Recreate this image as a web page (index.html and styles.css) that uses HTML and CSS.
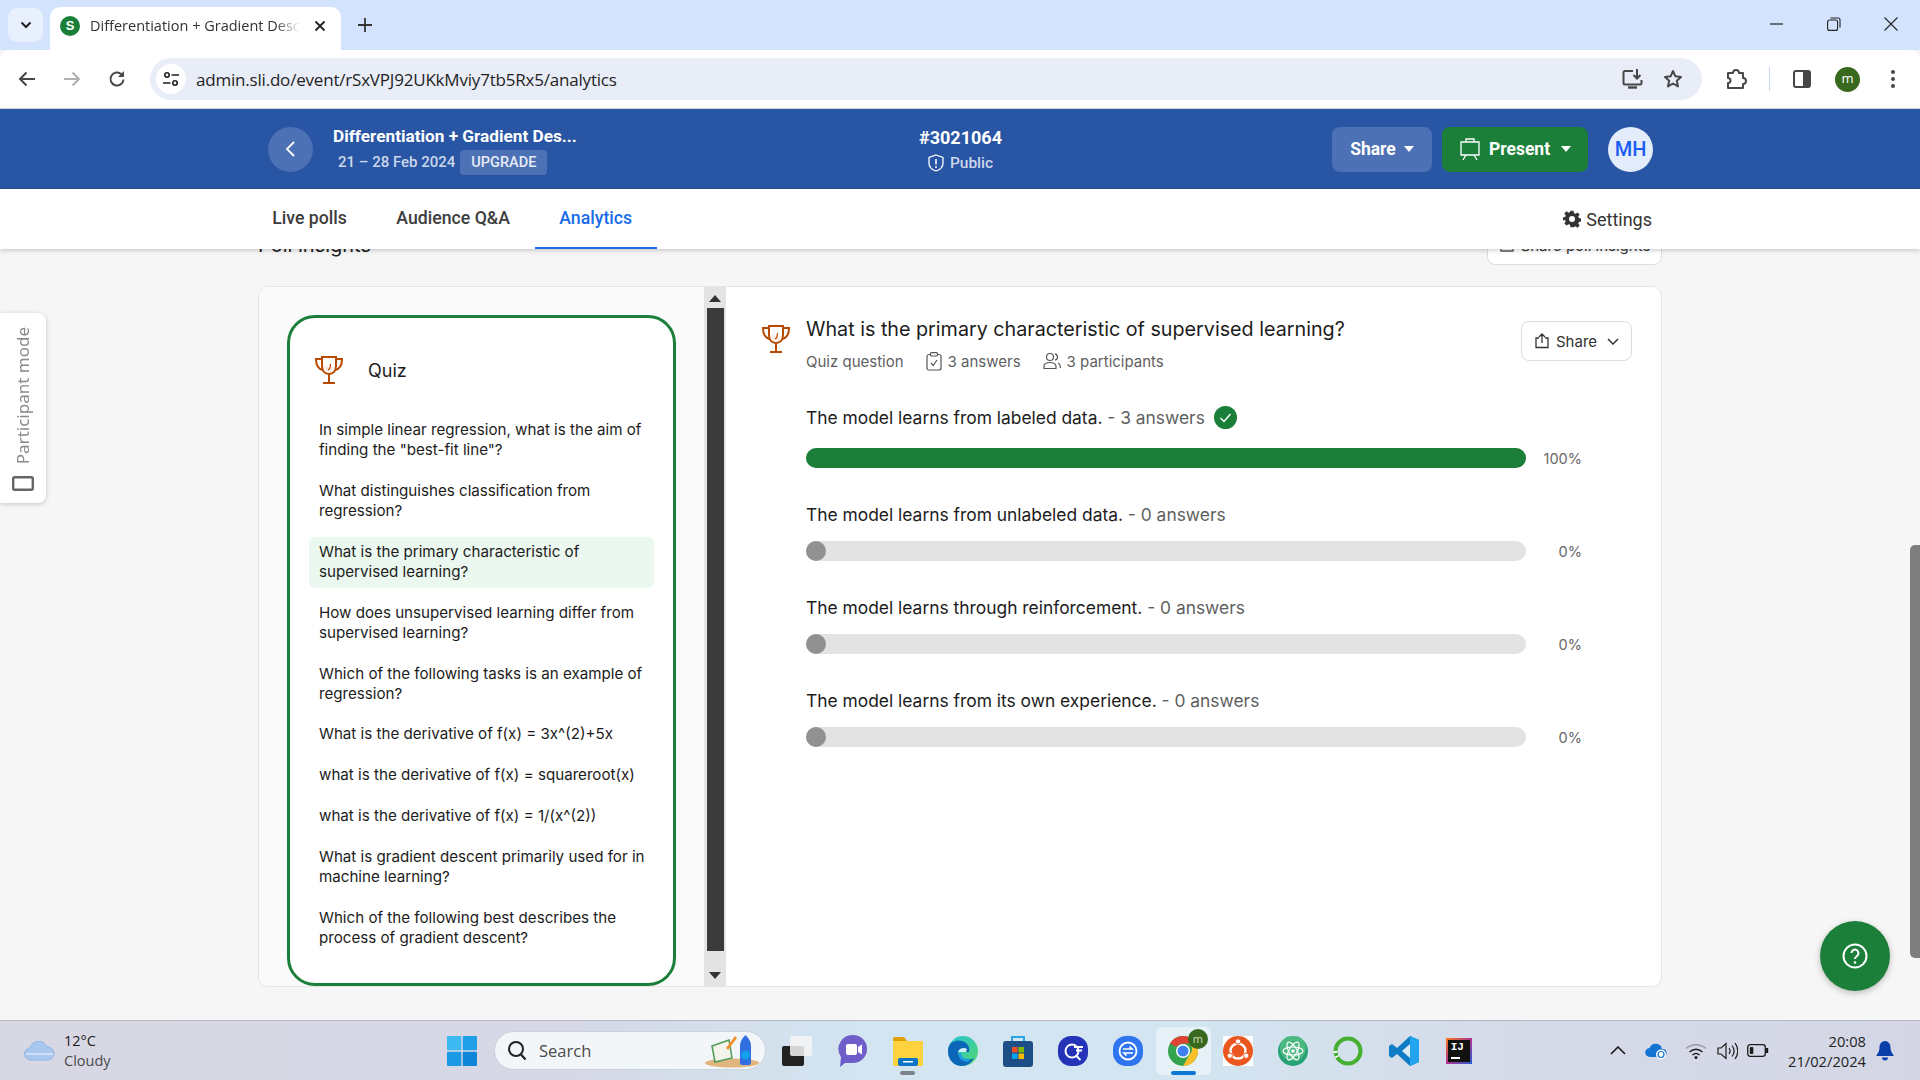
FILE: index.html
```html
<!DOCTYPE html>
<html lang="en">
<head>
  <meta charset="UTF-8" />
  <title>Differentiation + Gradient Descent - Analytics</title>
  <link rel="stylesheet" href="styles.css">
</head>
<body>

  <svg class="defs" width="0" height="0">
    <symbol id="trophy" viewBox="0 0 30 30">
      <path d="M8 2h14v9c0 5-3 8-7 8s-7-3-7-8z" fill="#fff" stroke="#b84a00" stroke-width="2"/>
      <path d="M10 11c1 4 3 6 5 6.500 2 0 4-2 5-5z" fill="#f7e3d6" opacity=".7"/>
      <path d="M8 4H2c0 6 2 10 7 11M22 4h6c0 6-2 10-7 11M15 19v8M9 28h12" fill="none" stroke="#b84a00" stroke-width="2"/>
      <path d="M16.500 9c0 3 0 5-2.500 6" fill="none" stroke="#b84a00" stroke-width="1.300"/>
    </symbol>
    <symbol id="caret" viewBox="0 0 10 6"><path d="M0 0h10L5 6z" fill="#fff"/></symbol>
  </svg>

  <!-- browser tabs -->
  <div class="tabstrip">
    <div class="tab-drop"><svg width="12" height="8" viewBox="0 0 12 8"><path d="M1.500 1.500L6 6l4.500-4.500" fill="none" stroke="#1f1f1f" stroke-width="2"/></svg></div>
    <div class="tab">
      <span class="favicon">S</span>
      <span class="tab-title">Differentiation + Gradient Descent</span>
      <svg class="tab-close" width="12" height="12" viewBox="0 0 12 12"><path d="M1.500 1.500l9 9M10.500 1.500l-9 9" stroke="#1f1f1f" stroke-width="1.800"/></svg>
    </div>
    <svg class="tab-new" width="14" height="14" viewBox="0 0 14 14"><path d="M7 0v14M0 7h14" stroke="#333" stroke-width="1.800"/></svg>
    <div class="win-btns">
      <svg width="14" height="14" viewBox="0 0 14 14"><path d="M0 7h13" stroke="#222" stroke-width="1.200"/></svg>
      <svg width="14" height="14" viewBox="0 0 14 14"><rect x=".6" y="3" width="10" height="10.400" rx="2" fill="none" stroke="#222" stroke-width="1.100"/><path d="M3.500 1h7.500a2 2 0 0 1 2 2v7.500" fill="none" stroke="#222" stroke-width="1.100"/></svg>
      <svg width="14" height="14" viewBox="0 0 14 14"><path d="M.5.500l13 13M13.500.500l-13 13" stroke="#222" stroke-width="1.100"/></svg>
    </div>
  </div>

  <!-- browser toolbar -->
  <div class="toolbar">
    <svg class="nav-ico" width="18" height="16" viewBox="0 0 18 16"><path d="M17 8H2M8.500 1.500L2 8l6.500 6.500" fill="none" stroke="#474747" stroke-width="2"/></svg>
    <svg class="nav-ico" width="18" height="16" viewBox="0 0 18 16"><path d="M1 8h15M9.500 1.500L16 8l-6.500 6.500" fill="none" stroke="#b0b0b0" stroke-width="2"/></svg>
    <svg class="nav-ico" width="18" height="18" viewBox="0 0 18 18"><path d="M15.500 9.500a6.500 6.500 0 1 1-2-5.200" fill="none" stroke="#474747" stroke-width="2"/><path d="M16 1v6h-6z" fill="#474747"/></svg>
    <div class="urlbar">
      <span class="site-info">
        <svg width="16" height="16" viewBox="0 0 16 16"><circle cx="4" cy="4" r="2.200" fill="none" stroke="#1f1f1f" stroke-width="1.600"/><path d="M8.500 4H16M0 12h7.500" stroke="#1f1f1f" stroke-width="1.600"/><circle cx="12" cy="12" r="2.200" fill="none" stroke="#1f1f1f" stroke-width="1.600"/></svg>
      </span>
      <span class="url">admin.sli.do/event/rSxVPJ92UKkMviy7tb5Rx5/analytics</span>
      <svg class="url-ico" width="22" height="22" viewBox="0 0 22 22"><path d="M11 3H3a1.500 1.500 0 0 0-1.500 1.500V15A1.500 1.500 0 0 0 3 16.500h15a1.500 1.500 0 0 0 1.500-1.500v-3" fill="none" stroke="#474747" stroke-width="2"/><path d="M15 1v9M11.500 7l3.500 3.500L18.500 7" fill="none" stroke="#474747" stroke-width="2"/><path d="M6 19.500h9" stroke="#474747" stroke-width="2.400"/></svg>
      <svg class="url-ico star" width="20" height="20" viewBox="0 0 20 20"><path d="M10 2l2.400 5.300 5.600.6-4.200 3.800 1.200 5.700L10 14.500l-5 2.900 1.200-5.700L2 7.900l5.600-.6z" fill="none" stroke="#474747" stroke-width="2" stroke-linejoin="round"/></svg>
    </div>
    <svg class="tool-ext" width="22" height="22" viewBox="0 0 22 22"><path d="M3 5h5a3 3 0 0 1 6 0h4v5a3 3 0 0 1 0 6v4H3v-5a2.500 2.500 0 0 0 0-5z" fill="none" stroke="#474747" stroke-width="2" stroke-linejoin="round"/></svg>
    <span class="tool-sep"></span>
    <svg class="tool-side" width="18" height="18" viewBox="0 0 18 18"><rect x="1" y="1" width="16" height="16" rx="2" fill="none" stroke="#474747" stroke-width="2"/><rect x="10" y="1" width="7" height="16" fill="#474747"/></svg>
    <span class="tool-avatar">m</span>
    <svg class="tool-menu" width="4" height="18" viewBox="0 0 4 18"><circle cx="2" cy="2" r="2" fill="#474747"/><circle cx="2" cy="9" r="2" fill="#474747"/><circle cx="2" cy="16" r="2" fill="#474747"/></svg>
  </div>

  <!-- slido header -->
  <header class="event-head">
    <div class="head-left">
      <span class="round-btn"><svg width="11" height="18" viewBox="0 0 11 18"><path d="M9 2L2 9l7 7" fill="none" stroke="#fff" stroke-width="1.800"/></svg></span>
      <div class="event-info">
        <div class="event-title">Differentiation + Gradient Des...</div>
        <div class="event-meta"><span class="event-date">21 – 28 Feb 2024</span><span class="chip">UPGRADE</span></div>
      </div>
    </div>
    <div class="head-mid">
      <div class="event-code">#3021064</div>
      <div class="event-public">
        <svg width="16" height="18" viewBox="0 0 16 18"><path d="M8 1l7 2.500V9c0 4-3 6.800-7 8-4-1.200-7-4-7-8V3.500z" fill="none" stroke="#fff" stroke-width="1.300"/><path d="M8 5v5.500" stroke="#fff" stroke-width="1.500"/><circle cx="8" cy="13" r="1" fill="#fff"/></svg>
        Public
      </div>
    </div>
    <div class="head-right">
      <span class="btn btn-share">Share <svg width="10" height="6"><use href="#caret"/></svg></span>
      <span class="btn btn-present">
        <svg width="22" height="24" viewBox="0 0 22 24"><path d="M2 5h18v13H2zM7 5V2h8v3M7 18l-3 5M15 18l3 5" fill="none" stroke="#fff" stroke-width="1.300"/></svg>
        Present <svg class="caret-gap" width="10" height="6"><use href="#caret"/></svg>
      </span>
      <span class="user-badge">MH</span>
    </div>
  </header>

  <nav class="nav-tabs">
    <a class="nav-tab">Live polls</a>
    <a class="nav-tab">Audience Q&amp;A</a>
    <a class="nav-tab active">Analytics</a>
    <span class="settings">
      <svg width="18" height="18" viewBox="0 0 24 24"><path fill="#333" fill-rule="evenodd" d="M10 1h4l.7 3.200 1.900.8 2.800-1.800 2.800 2.800-1.800 2.800.8 1.900 3.200.7v4l-3.200.7-.8 1.900 1.800 2.800-2.800 2.800-2.800-1.800-1.900.8L14 23h-4l-.7-3.200-1.900-.8-2.800 1.800-2.800-2.800 1.800-2.800-.8-1.900L-.4 14v-4l3.200-.7.8-1.900L1.800 4.600l2.800-2.800 2.800 1.800 1.900-.8zM12 8a4 4 0 1 0 0 8 4 4 0 0 0 0-8z"/></svg>
      Settings
    </span>
  </nav>

  <main class="page">
    <div class="insights-head">
      <h2>Poll insights</h2>
      <span class="share-insights">
        <svg width="16" height="16" viewBox="0 0 16 16"><path d="M4 3H2v11h12V3h-2M8 1v8" fill="none" stroke="#555" stroke-width="1.300"/></svg>
        Share poll insights
      </span>
    </div>

    <section class="card">
      <div class="list-pane">
        <div class="quiz-box">
          <div class="quiz-head">
            <svg width="30" height="30"><use href="#trophy"/></svg>
            <span>Quiz</span>
          </div>
          <ul class="quiz-list">
            <li>In simple linear regression, what is the aim of finding the "best-fit line"?</li>
            <li>What distinguishes classification from regression?</li>
            <li class="current">What is the primary characteristic of supervised learning?</li>
            <li>How does unsupervised learning differ from supervised learning?</li>
            <li>Which of the following tasks is an example of regression?</li>
            <li>What is the derivative of f(x) = 3x^(2)+5x</li>
            <li>what is the derivative of f(x) = squareroot(x)</li>
            <li>what is the derivative of f(x) = 1/(x^(2))</li>
            <li>What is gradient descent primarily used for in machine learning?</li>
            <li>Which of the following best describes the process of gradient descent?</li>
          </ul>
        </div>
      </div>

      <div class="pane-scroll">
        <svg width="12" height="7" viewBox="0 0 12 7"><path d="M6 0l6 7H0z" fill="#333"/></svg>
        <span class="pane-thumb"></span>
        <svg width="12" height="7" viewBox="0 0 12 7"><path d="M0 0h12L6 7z" fill="#333"/></svg>
      </div>

      <div class="result-pane">
        <div class="result-head">
          <svg class="result-trophy" width="30" height="30"><use href="#trophy"/></svg>
          <div>
            <h3>What is the primary characteristic of supervised learning?</h3>
            <div class="result-sub">
              <span>Quiz question</span>
              <span class="stat">
                <svg width="16" height="19" viewBox="0 0 16 19"><rect x="1" y="2.500" width="14" height="15.500" rx="2" fill="none" stroke="#555" stroke-width="1.200"/><rect x="4.500" y=".7" width="7" height="3.300" rx="1" fill="#fff" stroke="#555" stroke-width="1.200"/><path d="M5 11l2.200 2.500L11 8" fill="none" stroke="#555" stroke-width="1.200"/></svg>
                3 answers
              </span>
              <span class="stat">
                <svg width="18" height="18" viewBox="0 0 18 18"><circle cx="7" cy="5" r="3.500" fill="none" stroke="#555" stroke-width="1.200"/><path d="M1 16.500v-2c0-2.500 2-4 6-4s6 1.500 6 4v2z" fill="none" stroke="#555" stroke-width="1.200"/><path d="M12 1.800a3.300 3.300 0 0 1 0 6.400M15 11c1.500.7 2.300 2 2.300 3.500v1.500" fill="none" stroke="#555" stroke-width="1.200"/></svg>
                3 participants
              </span>
            </div>
          </div>
          <span class="result-share">
            <svg width="16" height="16" viewBox="0 0 16 16"><path d="M5 5H2v9.500h12V5h-3M8 10V1.500M5 4l3-3 3 3" fill="none" stroke="#333" stroke-width="1.300"/></svg>
            Share
            <svg class="chev" width="12" height="7" viewBox="0 0 12 7"><path d="M1 1l5 5 5-5" fill="none" stroke="#333" stroke-width="1.500"/></svg>
          </span>
        </div>

        <div class="options">
          <div class="option correct">
            <div class="opt-label">The model learns from labeled data. <em>- 3 answers</em>
              <svg class="opt-check" width="23" height="23" viewBox="0 0 23 23"><circle cx="11.500" cy="11.500" r="11.500" fill="#1b7f3a"/><path d="M6.500 12l3.500 3.500 6.500-7.500" fill="none" stroke="#fff" stroke-width="1.400"/></svg>
            </div>
            <div class="opt-row">
              <div class="bar"><div class="bar-fill" style="width:100%"></div></div>
              <span class="pct">100%</span>
            </div>
          </div>
          <div class="option">
            <div class="opt-label">The model learns from unlabeled data. <em>- 0 answers</em></div>
            <div class="opt-row">
              <div class="bar"><div class="bar-dot"></div></div>
              <span class="pct">0%</span>
            </div>
          </div>
          <div class="option">
            <div class="opt-label">The model learns through reinforcement. <em>- 0 answers</em></div>
            <div class="opt-row">
              <div class="bar"><div class="bar-dot"></div></div>
              <span class="pct">0%</span>
            </div>
          </div>
          <div class="option">
            <div class="opt-label">The model learns from its own experience. <em>- 0 answers</em></div>
            <div class="opt-row">
              <div class="bar"><div class="bar-dot"></div></div>
              <span class="pct">0%</span>
            </div>
          </div>
        </div>
      </div>
    </section>

    <!-- things floating over the page -->
    <div class="side-tab">
      <span class="side-text">Participant mode</span>
      <svg width="22" height="15" viewBox="0 0 22 15"><rect x="1.200" y="1.200" width="19.600" height="12.600" rx="1.500" fill="none" stroke="#666" stroke-width="2.400"/></svg>
    </div>
    <div class="help-fab">
      <svg width="26" height="26" viewBox="0 0 26 26"><circle cx="13" cy="13" r="11.500" fill="none" stroke="#fff" stroke-width="2"/><path d="M9.500 10a3.500 3.500 0 1 1 5.500 3c-1.300.9-2 1.500-2 3" fill="none" stroke="#fff" stroke-width="2"/><circle cx="13" cy="19.500" r="1.300" fill="#fff"/></svg>
    </div>
    <span class="page-thumb"></span>
  </main>

  <!-- windows taskbar -->
  <footer class="taskbar">
    <div class="weather">
      <svg width="31" height="20" viewBox="0 0 31 20"><path d="M7 19a6 6 0 0 1-1-12 9 9 0 0 1 17-1 6.500 6.500 0 0 1 1 13z" fill="#a9c8f0" stroke="#8fb4e6"/><path d="M2 13h27" stroke="#cfe0f7" stroke-width="2"/></svg>
      <div class="weather-text"><div>12°C</div><div class="weather-sub">Cloudy</div></div>
    </div>
    <svg class="start" width="30" height="30" viewBox="0 0 30 30">
      <rect width="14.300" height="14.300" rx="1" fill="#3cb9f0"/><rect x="15.700" width="14.300" height="14.300" rx="1" fill="#1fa0e8"/>
      <rect y="15.700" width="14.300" height="14.300" rx="1" fill="#1a9ae5"/><rect x="15.700" y="15.700" width="14.300" height="14.300" rx="1" fill="#0f86d8"/>
    </svg>
    <div class="search">
      <svg width="20" height="21" viewBox="0 0 20 21"><circle cx="9" cy="9" r="7" fill="none" stroke="#222" stroke-width="2"/><path d="M14 14.500l4.500 5" stroke="#222" stroke-width="2.200"/></svg>
      <span>Search</span>
      <svg class="search-art" width="56" height="34" viewBox="0 0 56 34">
        <ellipse cx="28" cy="29" rx="27" ry="4.500" fill="#e0b57f"/>
        <path d="M8 12l17-6 3 18-17 4z" fill="#f4f4ec" stroke="#4f9a55" stroke-width="1.500"/>
        <path d="M22 14l9-12 2 2-9 12z" fill="#f0922e"/>
        <path d="M36 12c0-4 2-8 5.500-11C45 4 47 8 47 12v17a2 2 0 0 1-2 2h-7a2 2 0 0 1-2-2z" fill="#2f6fe0"/>
        <circle cx="41.500" cy="21" r="4.500" fill="#12a0ea"/>
      </svg>
    </div>

    <div class="task-icons">
      <span class="task-ico">
        <svg width="32" height="32" viewBox="0 0 32 32"><rect x="0" y="11" width="22" height="20" rx="2" fill="#222"/><rect x="8" y="1" width="22" height="20" rx="2" fill="#f4f4f4" fill-opacity=".85"/></svg>
      </span>
      <span class="task-ico">
        <svg width="30" height="34" viewBox="0 0 30 34"><path d="M15 1a14 14 0 0 1 0 28H7l-5 4 1-10A14 14 0 0 1 15 1z" fill="#6f5dc9"/><rect x="8" y="10" width="11" height="11" rx="2" fill="#fff"/><path d="M20 13l4-2.500v10L20 18z" fill="#fff"/></svg>
      </span>
      <span class="task-ico">
        <svg width="30" height="30" viewBox="0 0 30 30"><path d="M0 3a2 2 0 0 1 2-2h9l3 4H0z" fill="#e0a100"/><rect y="5" width="30" height="25" rx="1" fill="#fdd23e"/><rect x="5" y="22" width="20" height="8" rx="2" fill="#0b74c4"/><rect x="10" y="25" width="10" height="1.500" fill="#fff"/></svg>
      </span>
      <span class="task-ico">
        <svg width="30" height="30" viewBox="0 0 30 30"><defs><linearGradient id="edgeG" x1="0" y1="0" x2="1" y2="1"><stop offset="0" stop-color="#2bc4d8"/><stop offset="1" stop-color="#4fd66e"/></linearGradient></defs><circle cx="15" cy="15" r="15" fill="url(#edgeG)"/><path d="M0 15C0 6 8 3 14 5c6 2 8 6 7 11H10c0 6 8 10 16 6-3 5-7 8-12 8C6 30 0 24 0 15z" fill="#0c66b8"/><path d="M10 16c1-4 6-5 9-3l-1 3z" fill="#cdeef5"/><path d="M12 17c-1 5 4 8 9 7" fill="none" stroke="#1b9de2" stroke-width="3"/></svg>
      </span>
      <span class="task-ico">
        <svg width="30" height="32" viewBox="0 0 30 32"><path d="M9 7V2h12v5" fill="none" stroke="#2aa5e8" stroke-width="2"/><rect y="6" width="30" height="26" rx="3" fill="#1d4e86"/><rect x="9" y="12" width="5.500" height="5.500" fill="#f25022"/><rect x="15.500" y="12" width="5.500" height="5.500" fill="#7fba00"/><rect x="9" y="18.500" width="5.500" height="5.500" fill="#00a4ef"/><rect x="15.500" y="18.500" width="5.500" height="5.500" fill="#ffb900"/></svg>
      </span>
      <span class="task-ico">
        <svg width="30" height="30" viewBox="0 0 30 30"><rect width="30" height="30" rx="13" fill="#2433b8"/><circle cx="14" cy="15" r="6.500" fill="none" stroke="#fff" stroke-width="2"/><path d="M18.500 20l4 4M16 11h9M18 14.500h6" stroke="#fff" stroke-width="1.800"/></svg>
      </span>
      <span class="task-ico">
        <svg width="30" height="30" viewBox="0 0 30 30"><rect width="30" height="30" rx="13" fill="#2f74f0"/><circle cx="15" cy="15" r="8.500" fill="none" stroke="#fff" stroke-width="1.800"/><path d="M10 13h9l-2.500-2.500M20 17h-9l2.500 2.500" fill="none" stroke="#fff" stroke-width="1.700"/></svg>
      </span>
      <span class="task-ico task-active">
        <svg width="30" height="30" viewBox="0 0 30 30"><circle cx="15" cy="15" r="15" fill="#33a34d"/><path d="M15 0a15 15 0 0 1 13 7.500H15A7.500 7.500 0 0 0 8.500 11L2 7.500A15 15 0 0 1 15 0z" fill="#e24235"/><path d="M28 7.500A15 15 0 0 1 15 30l6.500-11.200a7.500 7.500 0 0 0 0-11.300z" fill="#f8c12c"/><circle cx="15" cy="15" r="7" fill="#fff"/><circle cx="15" cy="15" r="5.500" fill="#3c7ff0"/></svg>
        <span class="task-badge">m</span>
      </span>
      <span class="task-ico">
        <svg width="30" height="30" viewBox="0 0 30 30"><rect width="30" height="30" fill="#fff"/><circle cx="15" cy="15" r="15" fill="#e9561f"/><circle cx="15" cy="15" r="7.500" fill="none" stroke="#fff" stroke-width="2.400"/><circle cx="15" cy="5.500" r="2.700" fill="#fff" stroke="#e9561f"/><circle cx="6.800" cy="19.700" r="2.700" fill="#fff" stroke="#e9561f"/><circle cx="23.200" cy="19.700" r="2.700" fill="#fff" stroke="#e9561f"/></svg>
      </span>
      <span class="task-ico">
        <svg width="30" height="30" viewBox="0 0 30 30"><circle cx="15" cy="15" r="15" fill="#27a275"/><circle cx="15" cy="12" r="13" fill="#6fcb8e" opacity=".5"/><g fill="none" stroke="#fff" stroke-width="1.200"><ellipse cx="15" cy="15" rx="10" ry="4" transform="rotate(60 15 15)"/><ellipse cx="15" cy="15" rx="10" ry="4" transform="rotate(-60 15 15)"/><ellipse cx="15" cy="15" rx="10" ry="4"/></g><circle cx="15" cy="15" r="1.800" fill="#fff"/></svg>
      </span>
      <span class="task-ico">
        <svg width="30" height="30" viewBox="0 0 30 30"><circle cx="15" cy="15" r="12.500" fill="none" stroke="#44b02f" stroke-width="4"/><circle cx="15" cy="15" r="12.500" fill="none" stroke="#fff" stroke-width="4.200" stroke-dasharray="1.500 3 2 2.500 0 70" transform="rotate(150 15 15)"/></svg>
      </span>
      <span class="task-ico">
        <svg width="30" height="30" viewBox="0 0 30 30"><path d="M21 0l9 4v22l-9 4L8 18l-5 4-3-2v-10l3-2 5 4z" fill="#0f7cc6"/><path d="M21 0l9 4v22l-9 4z" fill="#22a5ee"/><path d="M21 8l-8 7 8 7z" fill="#dcecf7"/></svg>
      </span>
      <span class="task-ico">
        <span class="ij-logo"><span class="ij-box">IJ</span></span>
      </span>
    </div>

    <div class="tray">
      <svg class="tray-chev" width="16" height="9" viewBox="0 0 16 9"><path d="M1 8l7-7 7 7" fill="none" stroke="#1c1c1c" stroke-width="1.600"/></svg>
      <svg class="tray-cloud" width="22" height="18" viewBox="0 0 22 18"><path d="M5 15a4.500 4.500 0 0 1-.5-9A6.500 6.500 0 0 1 17 7a4 4 0 0 1 1 8z" fill="#1273d2"/><circle cx="16" cy="12.500" r="5" fill="#fff"/><circle cx="16" cy="12.500" r="3" fill="none" stroke="#1273d2" stroke-width="1.200"/></svg>
      <svg class="tray-wifi" width="22" height="16" viewBox="0 0 22 16"><path d="M1 5.500c6-5 14-5 20 0" fill="none" stroke="#9b9ba3" stroke-width="1.300"/><path d="M4.500 9c4-3.300 9-3.300 13 0M7.500 12c2-1.700 5-1.700 7 0" fill="none" stroke="#1c1c1c" stroke-width="1.400"/><circle cx="11" cy="14.500" r="1.500" fill="#1c1c1c"/></svg>
      <svg class="tray-vol" width="21" height="18" viewBox="0 0 21 18"><path d="M1 6v6h3l5 4.500v-15L4 6z" fill="none" stroke="#1c1c1c" stroke-width="1.200"/><path d="M12 6c1.500 2 1.500 4 0 6M15 3.500c2.700 3.500 2.700 7.500 0 11M18 1c3.500 5 3.500 11 0 16" fill="none" stroke="#1c1c1c" stroke-width="1.200"/></svg>
      <svg class="tray-batt" width="22" height="13" viewBox="0 0 22 13"><rect x=".7" y=".7" width="17.600" height="11.600" rx="2.500" fill="none" stroke="#1c1c1c" stroke-width="1.300"/><rect x="2.800" y="3" width="3.500" height="7" rx="1" fill="#1c1c1c"/><path d="M20 4v5" stroke="#1c1c1c" stroke-width="2.400"/></svg>
      <div class="clock"><div>20:08</div><div>21/02/2024</div></div>
      <svg class="tray-bell" width="18" height="20" viewBox="0 0 18 20"><path d="M9 0c3.500 0 5.500 3 5.500 6.500 0 3 1 5 3 7.500v1H.5v-1c2-2.500 3-4.500 3-7.500C3.500 3 5.500 0 9 0z" fill="#0a3fa8"/><path d="M6 16.500h6c0 2-1.300 3-3 3s-3-1-3-3z" fill="#0a3fa8"/></svg>
    </div>
  </footer>

</body>
</html>
```

FILE: styles.css
```css
* {
  box-sizing: border-box;
}

html, body {
  margin: 0;
  height: 100%;
}

body {
  width: 1920px;
  height: 1080px;
  overflow: hidden;
  display: flex;
  flex-direction: column;
  font-family: Inter, sans-serif;
  color: #1c1c1c;
  background: #f6f6f6;
}

.defs {
  position: absolute;
}

svg {
  flex: none;
  display: block;
}

/* browser tabs */
.tabstrip {
  height: 50px;
  flex: none;
  background: #d3e3fd;
  display: flex;
  align-items: flex-start;
  padding-left: 8px;
}

.tab-drop {
  width: 35px;
  height: 34px;
  margin-top: 8px;
  margin-right: 7px;
  border-radius: 9px;
  background: #e9f0fd;
  display: flex;
  align-items: center;
  justify-content: center;
}

.tab {
  width: 291px;
  height: 43px;
  margin-top: 7px;
  background: #fff;
  border-radius: 10px 10px 0 0;
  display: flex;
  align-items: center;
  padding: 0 15px 6px 10px;
}

.favicon {
  width: 20px;
  height: 20px;
  flex: none;
  border-radius: 50%;
  background: #1b7f3a;
  color: #fff;
  font: bold 13px/20px "Liberation Sans", sans-serif;
  text-align: center;
  margin-right: 10px;
}

.tab-title {
  flex: 1;
  overflow: hidden;
  white-space: nowrap;
  font: 14.500px "Open Sans", sans-serif;
  color: #333;
  -webkit-mask-image: linear-gradient(90deg, #000 88%, transparent 100%);
  mask-image: linear-gradient(90deg, #000 88%, transparent 100%);
}

.tab-close {
  margin-left: 14px;
}

.tab-new {
  margin: 18px 0 0 17px;
}

.win-btns {
  margin-left: auto;
  display: flex;
  gap: 43px;
  padding: 17px 22px 0 0;
}

/* browser toolbar */
.toolbar {
  height: 59px;
  flex: none;
  background: #fff;
  border-bottom: 1px solid #cfd0d2;
  border-radius: 10px 10px 0 0;
  display: flex;
  align-items: center;
  padding-left: 18px;
}

.nav-ico {
  margin-right: 27px;
}

.nav-ico:nth-child(3) {
  margin-right: 24px;
}

.urlbar {
  width: 1552px;
  height: 42px;
  border-radius: 21px;
  background: #e9edf8;
  display: flex;
  align-items: center;
  padding: 0 19px 0 6px;
}

.site-info {
  width: 30px;
  height: 30px;
  border-radius: 50%;
  background: #fff;
  display: flex;
  align-items: center;
  justify-content: center;
  margin-right: 10px;
}

.url {
  font: 17px "Open Sans", sans-serif;
  letter-spacing: -.2px;
  color: #1f1f1f;
}

.url-ico {
  margin-left: auto;
}

.url-ico.star {
  margin-left: 19px;
}

.tool-ext {
  margin-left: 23px;
}

.tool-sep {
  width: 1px;
  height: 24px;
  background: #c7d8f3;
  margin: 0 23px 0 22px;
}

.tool-side {
  margin-right: 24px;
}

.tool-avatar {
  width: 25px;
  height: 25px;
  border-radius: 50%;
  background: #38691f;
  color: #fff;
  font: 13px/23px "Open Sans", sans-serif;
  text-align: center;
}

.tool-menu {
  margin-left: 31px;
}

/* slido header */
.event-head {
  height: 80px;
  flex: none;
  background: #2955a5;
  color: #fff;
  display: grid;
  grid-template-columns: 1fr auto 1fr;
  align-items: center;
  padding: 0 267px 0 268px;
  font-family: Roboto, sans-serif;
}

.head-left {
  display: flex;
  align-items: center;
  gap: 20px;
}

.round-btn {
  width: 45px;
  height: 45px;
  border-radius: 50%;
  background: #4d71b5;
  display: flex;
  align-items: center;
  justify-content: center;
}

.event-title {
  font-size: 17.200px;
  font-weight: 700;
  line-height: 24px;
}

.event-meta {
  display: flex;
  align-items: center;
  margin: 2px 0 0 5px;
  gap: 5px;
}

.event-date {
  font-size: 15px;
  font-weight: 500;
  color: #ccd7ea;
}

.chip {
  width: 87px;
  height: 25px;
  border-radius: 4px;
  background: #4d71b5;
  color: #e6ecf6;
  font-size: 14.500px;
  font-weight: 500;
  line-height: 25px;
  text-align: center;
}

.head-mid {
  text-align: center;
}

.event-code {
  font-size: 18px;
  font-weight: 700;
  line-height: 24px;
}

.event-public {
  display: flex;
  align-items: center;
  justify-content: center;
  gap: 6px;
  font-size: 15.500px;
  font-weight: 500;
  color: #ccd7ea;
  margin-top: 4px;
}

.head-right {
  display: flex;
  align-items: center;
  justify-content: flex-end;
  gap: 10px;
}

.btn {
  height: 45px;
  border-radius: 8px;
  display: flex;
  align-items: center;
  justify-content: center;
  font-size: 17.500px;
  font-weight: 700;
}

.btn-share {
  width: 100px;
  gap: 8px;
  background: #4d71b5;
}

.btn-present {
  width: 146px;
  gap: 8px;
  background: #1b7f3a;
}

.caret-gap {
  margin-left: 3px;
}

.user-badge {
  width: 45px;
  height: 45px;
  margin-left: 10px;
  border-radius: 50%;
  background: #e3ecfb;
  color: #1a5df0;
  font-size: 20px;
  font-weight: 500;
  line-height: 45px;
  text-align: center;
}

/* tabs under header */
.nav-tabs {
  position: relative;
  z-index: 2;
  height: 60px;
  flex: none;
  background: #fff;
  box-shadow: 0 1px 5px rgba(0, 0, 0, .22);
  display: flex;
  align-items: stretch;
  padding: 0 268px 0 247.500px;
  font-family: Roboto, sans-serif;
}

.nav-tab {
  padding: 0 24.700px;
  font-size: 17.700px;
  font-weight: 500;
  line-height: 59px;
  color: #3d3d3d;
  border-bottom: 2px solid transparent;
}

.nav-tab.active {
  color: #1a6be8;
  border-bottom-color: #1a6be8;
}

.settings {
  margin-left: auto;
  display: flex;
  align-items: center;
  gap: 5px;
  font-size: 18px;
  color: #333;
}

/* page */
.page {
  position: relative;
  flex: 1;
  overflow: hidden;
  padding: 0 258px;
  min-height: 0;
}

.insights-head {
  height: 40px;
  margin-top: -24px;
  display: flex;
  align-items: center;
  justify-content: space-between;
}

.insights-head h2 {
  margin: 0;
  font-size: 20px;
  font-weight: 400;
}

.share-insights {
  width: 175px;
  height: 40px;
  background: #fff;
  border: 1px solid #ddd;
  border-radius: 8px;
  display: flex;
  align-items: center;
  justify-content: center;
  gap: 6px;
  font-size: 15px;
  color: #333;
}

.card {
  margin-top: 21px;
  height: 701px;
  background: #fff;
  border: 1px solid #e4e4e4;
  border-radius: 10px;
  display: flex;
  overflow: hidden;
}

.list-pane {
  width: 445px;
  flex: none;
  background: #fafafa;
  padding: 28px 0 0 28px;
}

.quiz-box {
  width: 389px;
  height: 671px;
  background: #fff;
  border: 3px solid #1b7f3a;
  border-radius: 28px;
  padding: 0 19px;
}

.quiz-head {
  display: flex;
  align-items: center;
  gap: 24px;
  padding: 37px 0 0 5px;
  font-size: 18px;
}

.quiz-list {
  list-style: none;
  margin: 30px 0 0;
  padding: 0;
  display: flex;
  flex-direction: column;
  gap: 9.900px;
  font-size: 15.150px;
  line-height: 20px;
}

.quiz-list li {
  padding: 5px 4px 6px 10px;
  border-radius: 6px;
}

.quiz-list li.current {
  background: #ebf8ef;
}

.pane-scroll {
  width: 22px;
  flex: none;
  background: #e4e4e4;
  display: flex;
  flex-direction: column;
  align-items: center;
  padding: 8px 0 7px;
  gap: 6px;
}

.pane-thumb {
  width: 17px;
  flex: 1;
  background: #3a3a3a;
  margin-bottom: 15px;
}

.result-pane {
  flex: 1;
  padding: 28px 29px 0 35px;
}

.result-head {
  display: flex;
  align-items: flex-start;
}

.result-trophy {
  margin: 9px 15px 0 0;
}

.result-head h3 {
  margin: 0;
  font-size: 19.730px;
  font-weight: 400;
  line-height: 28px;
}

.result-sub {
  display: flex;
  align-items: center;
  gap: 22px;
  margin-top: 7px;
  height: 22px;
  font-size: 15px;
  color: #5f5f5f;
}

.stat {
  display: flex;
  align-items: center;
  gap: 6px;
}

.result-share {
  width: 111px;
  height: 40px;
  margin: 6px 0 0 auto;
  border: 1px solid #ddd;
  border-radius: 8px;
  display: flex;
  align-items: center;
  justify-content: center;
  gap: 6px;
  font-size: 15px;
  color: #333;
}

.chev {
  margin-left: 4px;
}

.options {
  padding-left: 45px;
  margin-top: 33px;
}

.option {
  margin-bottom: 34px;
}

.opt-label {
  display: flex;
  align-items: center;
  height: 24px;
  font-size: 17.400px;
  white-space: pre;
}

.opt-label em {
  font-style: normal;
  color: #5f5f5f;
}

.opt-check {
  margin-left: 9px;
}

.opt-row {
  display: flex;
  align-items: center;
  margin-top: 15px;
}

.correct .opt-row {
  margin-top: 19px;
}

.bar {
  width: 720px;
  height: 20px;
  border-radius: 10px;
  background: #e3e3e3;
}

.bar-fill {
  height: 100%;
  border-radius: 10px;
  background: #1b7f3a;
}

.bar-dot {
  width: 20px;
  height: 20px;
  border-radius: 50%;
  background: #919191;
}

.pct {
  width: 56px;
  text-align: right;
  font-size: 14.500px;
  color: #666;
}

/* floating things */
.side-tab {
  position: absolute;
  left: 0;
  top: 64px;
  width: 46px;
  height: 190px;
  background: #fff;
  border-radius: 0 8px 8px 0;
  box-shadow: 0 1px 5px rgba(0, 0, 0, .2);
  display: flex;
  flex-direction: column;
  align-items: center;
  padding-top: 14px;
  gap: 12px;
}

.side-text {
  writing-mode: vertical-rl;
  transform: rotate(180deg);
  font: 17px "Noto Sans", sans-serif;
  color: #8a8a8a;
  white-space: nowrap;
  margin-left: -2px;
}

.help-fab {
  position: absolute;
  left: 1820px;
  top: 672px;
  width: 70px;
  height: 70px;
  border-radius: 50%;
  background: #1b7f3a;
  box-shadow: 0 2px 6px rgba(0, 0, 0, .25);
  display: flex;
  align-items: center;
  justify-content: center;
}

.page-thumb {
  position: absolute;
  right: 0;
  top: 296px;
  width: 10px;
  height: 413px;
  border-radius: 5px 0 0 5px;
  background: #7e7e7e;
}

/* taskbar */
.taskbar {
  height: 60px;
  flex: none;
  border-top: 1px solid #b6b7c0;
  background: linear-gradient(90deg, #d8d8e4 0%, #d6d8e6 30%, #d2e5f1 45%, #d2e5f1 62%, #d6dbe8 78%, #d4d6e6 100%);
  display: flex;
  align-items: center;
}

.weather {
  width: 447px;
  flex: none;
  display: flex;
  align-items: center;
  gap: 9px;
  padding-left: 24px;
  font: 14.500px/20px "Open Sans", sans-serif;
}

.weather-sub {
  color: #4a4a4a;
}

.search {
  width: 272px;
  height: 39px;
  margin-left: 17px;
  flex: none;
  border-radius: 20px;
  background: #f3f6f9;
  border: 1px solid #c9d3de;
  display: flex;
  align-items: center;
  padding-left: 12px;
  gap: 12px;
  font: 16.500px "Open Sans", sans-serif;
  color: #4a4a4a;
}

.search-art {
  margin-left: auto;
  margin-right: 5px;
}

.task-icons {
  display: flex;
  margin-left: 4px;
  flex: none;
}

.task-ico {
  position: relative;
  width: 55.100px;
  height: 48px;
  display: flex;
  align-items: center;
  justify-content: center;
}

.task-active {
  background: #e6f1f8;
  border-radius: 6px;
}

.task-active::after {
  content: "";
  position: absolute;
  left: 15px;
  right: 15px;
  bottom: 0;
  height: 4px;
  border-radius: 2px;
  background: #0a78d4;
}

.task-ico:nth-child(3)::after {
  content: "";
  position: absolute;
  left: 20px;
  right: 20px;
  bottom: 0;
  height: 4px;
  border-radius: 2px;
  background: #7d8289;
}

.task-badge {
  position: absolute;
  top: 2px;
  right: 3px;
  width: 20px;
  height: 20px;
  border-radius: 50%;
  background: #38691f;
  color: #cfe0b8;
  font: 11px/19px "Open Sans", sans-serif;
  text-align: center;
}

.ij-logo {
  width: 26px;
  height: 26px;
  padding: 2px;
  background: linear-gradient(135deg, #f97a12, #b0358f 50%, #2a5bd8);
}

.ij-box {
  display: block;
  position: relative;
  height: 100%;
  background: #111;
  color: #fff;
  font: bold 11px/14px "Liberation Mono", monospace;
  padding-left: 3px;
}

.ij-box::after {
  content: "";
  position: absolute;
  left: 3px;
  bottom: 3px;
  width: 9px;
  height: 2px;
  background: #fff;
}

.tray {
  flex: 1;
  display: flex;
  align-items: center;
  padding: 0 26px 0 124px;
}

.tray-cloud {
  margin-left: 19px;
}

.tray-wifi {
  margin-left: 18px;
}

.tray-vol {
  margin-left: 10px;
}

.tray-batt {
  margin-left: 9px;
}

.clock {
  margin-left: auto;
  text-align: right;
  font: 14.700px/20px "Open Sans", sans-serif;
  color: #222;
}

.tray-bell {
  margin-left: 10px;
}
```
